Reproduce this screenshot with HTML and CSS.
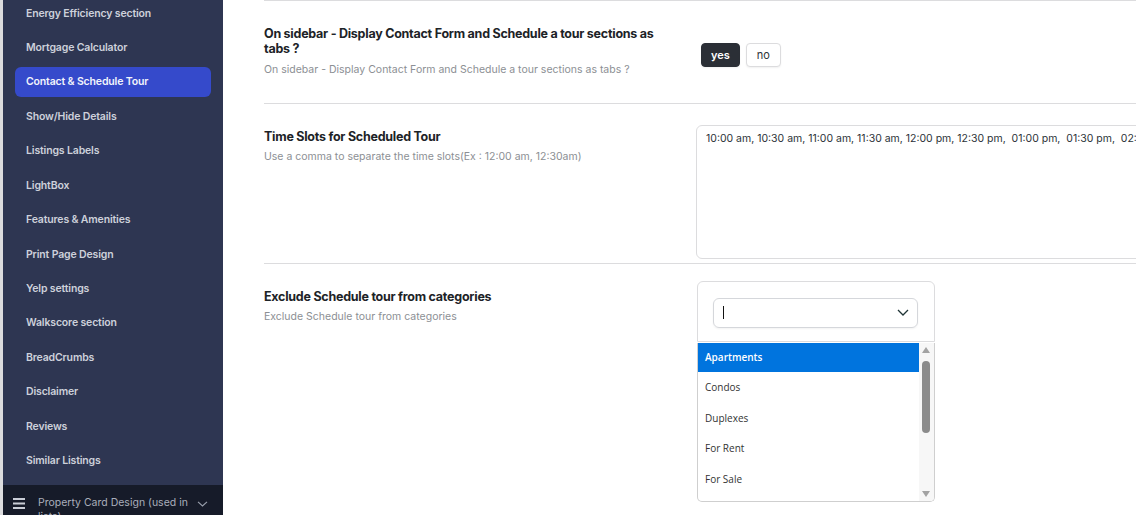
FILE: index.html
```html
<!DOCTYPE html>
<html lang="en">
<head>
    <meta charset="UTF-8">
    <title>Listing Settings</title>
    <link rel="stylesheet" href="styles.css">
</head>
<body>
    <div class="edge"></div>
    <aside class="sidebar">
        <nav class="nav">
            <a class="nav-item">Energy Efficiency section</a>
            <a class="nav-item">Mortgage Calculator</a>
            <a class="nav-item active">Contact &amp; Schedule Tour</a>
            <a class="nav-item">Show/Hide Details</a>
            <a class="nav-item">Listings Labels</a>
            <a class="nav-item">LightBox</a>
            <a class="nav-item">Features &amp; Amenities</a>
            <a class="nav-item">Print Page Design</a>
            <a class="nav-item">Yelp settings</a>
            <a class="nav-item">Walkscore section</a>
            <a class="nav-item">BreadCrumbs</a>
            <a class="nav-item">Disclaimer</a>
            <a class="nav-item">Reviews</a>
            <a class="nav-item">Similar Listings</a>
        </nav>
        <div class="nav-footer">
            <svg class="burger" width="12" height="11" viewBox="0 0 12 11">
                <rect x="0" y="0" width="12" height="2" fill="#c9cdd6"/>
                <rect x="0" y="4.5" width="12" height="2" fill="#c9cdd6"/>
                <rect x="0" y="9" width="12" height="2" fill="#c9cdd6"/>
            </svg>
            <span class="footer-label">Property Card Design (used in lists)</span>
            <svg class="footer-chevron" width="11" height="6" viewBox="0 0 11 6">
                <path d="M1 0.8 L5.5 5 L10 0.8" fill="none" stroke="#9aa0ad" stroke-width="1.1"/>
            </svg>
        </div>
    </aside>

    <main class="content">
        <section class="row row-tabs">
            <div class="label">
                <h3>On sidebar - Display Contact Form and Schedule a tour sections as tabs ?</h3>
                <p>On sidebar - Display Contact Form and Schedule a tour sections as tabs ?</p>
            </div>
            <div class="control">
                <div class="toggle">
                    <button class="btn btn-on">yes</button>
                    <button class="btn">no</button>
                </div>
            </div>
        </section>

        <section class="row row-slots">
            <div class="label">
                <h3>Time Slots for Scheduled Tour</h3>
                <p>Use a comma to separate the time slots(Ex : 12:00 am, 12:30am)</p>
            </div>
            <div class="control">
                <textarea class="slots">10:00 am, 10:30 am, 11:00 am, 11:30 am, 12:00 pm, 12:30 pm,  01:00 pm,  01:30 pm,  02:00 pm,  02:30 pm</textarea>
            </div>
        </section>

        <section class="row row-exclude">
            <div class="label">
                <h3>Exclude Schedule tour from categories</h3>
                <p>Exclude Schedule tour from categories</p>
            </div>
            <div class="control">
                <div class="picker">
                    <div class="picker-input">
                        <span class="caret"></span>
                        <svg width="12" height="7" viewBox="0 0 12 7">
                            <path d="M1 1 L6 6 L11 1" fill="none" stroke="#1f3436" stroke-width="1.3"/>
                        </svg>
                    </div>
                </div>
                <div class="options">
                    <ul class="option-list">
                        <li class="selected">Apartments</li>
                        <li>Condos</li>
                        <li>Duplexes</li>
                        <li>For Rent</li>
                        <li>For Sale</li>
                        <li>Houses</li>
                    </ul>
                    <div class="scroll">
                        <span class="arrow-up"></span>
                        <span class="thumb"></span>
                        <span class="arrow-down"></span>
                    </div>
                </div>
            </div>
        </section>
    </main>
</body>
</html>
```

FILE: styles.css
```css
body {
    margin: 0;
    height: 515px;
    display: flex;
    overflow: hidden;
    font-family: Inter, 'Liberation Sans', sans-serif;
    background: #fff;
}
.edge {
    width: 3px;
    flex: none;
    background: #dcdcde;
}
.sidebar {
    width: 220px;
    flex: none;
    background: #2e3652;
    display: flex;
    flex-direction: column;
}
.nav {
    flex: 1;
    display: flex;
    flex-direction: column;
    gap: 4.45px;
    margin-top: -2px;
}
.nav-item {
    display: flex;
    align-items: center;
    height: 30px;
    margin: 0 12px;
    padding: 0 11px;
    border-radius: 6px;
    font-size: 10.5px;
    font-weight: 600;
    letter-spacing: -0.15px;
    color: #cdd1db;
}
.nav-item.active {
    background: #354acb;
    color: #f2f4fb;
}
.nav-footer {
    height: 30px;
    flex: none;
    background: #161b29;
    display: flex;
    align-items: flex-start;
    padding: 11px 0 0 10px;
    box-sizing: border-box;
}
.burger {
    margin-top: 2px;
}
.footer-label {
    width: 152px;
    margin-left: 13px;
    font-size: 10.5px;
    line-height: 14px;
    color: #a9aebb;
}
.footer-chevron {
    margin: 5px 0 0 7px;
}

.content {
    flex: 1;
    padding-left: 41px;
    min-width: 0;
}
.row {
    display: grid;
    grid-template-columns: 400px 600px;
    column-gap: 32px;
    border-top: 1px solid #dcdcde;
    padding-top: 25px;
}
.row-tabs {
    padding-bottom: 25px;
}
.row-slots {
    padding-bottom: 4px;
}
.label h3 {
    margin: 0;
    font-size: 12.5px;
    line-height: 15px;
    font-weight: 700;
    letter-spacing: -0.25px;
    color: #1d2327;
}
.label p {
    margin: 5.5px 0 0;
    font-size: 10.5px;
    line-height: 16px;
    color: #8c8f94;
}
.toggle {
    display: flex;
    gap: 6px;
    margin: 17px 0 0 5px;
}
.btn {
    height: 24px;
    padding: 0 10px;
    border: 1px solid #dcdcde;
    border-radius: 4px;
    background: #fff;
    font-family: Inter, sans-serif;
    font-size: 11px;
    color: #2c3338;
    box-shadow: 0 1px 2px rgba(0,0,0,0.06);
}
.btn-on {
    background: #2b2f36;
    border-color: #2b2f36;
    color: #fff;
    font-weight: 600;
    padding: 0 9px;
}
.slots {
    display: block;
    margin-top: -4px;
    width: 600px;
    height: 134px;
    box-sizing: border-box;
    padding: 5px 9px;
    border: 1px solid #dcdcde;
    border-radius: 6px;
    resize: none;
    font-family: Inter, sans-serif;
    font-size: 10.5px;
    line-height: 16px;
    color: #2c3338;
    white-space: pre;
    overflow: hidden;
}
.picker {
    margin: -8px 0 0 1px;
    width: 238px;
    height: 61px;
    box-sizing: border-box;
    padding: 16px 16px 0 15px;
    border: 1px solid #dcdcde;
    border-radius: 6px 6px 0 0;
}
.picker-input {
    height: 30px;
    box-sizing: border-box;
    border: 1px solid #d5d7db;
    border-radius: 6px;
    display: flex;
    align-items: center;
    justify-content: space-between;
    padding: 0 8px 0 9px;
    box-shadow: 0 1px 2px rgba(0,0,0,0.05);
}
.caret {
    width: 1px;
    height: 13px;
    background: #111;
}
.options {
    margin: 1px 0 0 1px;
    width: 238px;
    height: 159px;
    box-sizing: border-box;
    display: flex;
    border: 1px solid #cfcfcf;
    border-top: none;
    border-radius: 0 0 5px 5px;
    overflow: hidden;
}
.option-list {
    flex: 1;
    margin: 0;
    padding: 0;
    list-style: none;
    font-family: 'Open Sans', sans-serif;
    font-size: 10px;
    color: #333;
}
.option-list li {
    height: 30.7px;
    line-height: 30px;
    padding-left: 7px;
}
.option-list li.selected {
    height: 29.5px;
    line-height: 29px;
    background: #0074de;
    color: #fff;
    font-weight: 600;
}
.scroll {
    width: 15px;
    flex: none;
    background: #f7f7f7;
    position: relative;
}
.thumb {
    position: absolute;
    left: 3px;
    top: 18px;
    width: 8px;
    height: 72px;
    border-radius: 4px;
    background: #8b8b8b;
}
.arrow-up,
.arrow-down {
    position: absolute;
    left: 3px;
    width: 0;
    height: 0;
    border-left: 4.5px solid transparent;
    border-right: 4.5px solid transparent;
}
.arrow-up {
    top: 4px;
    border-bottom: 6px solid #a3a3a3;
}
.arrow-down {
    bottom: 4px;
    border-top: 6px solid #a3a3a3;
}
```
